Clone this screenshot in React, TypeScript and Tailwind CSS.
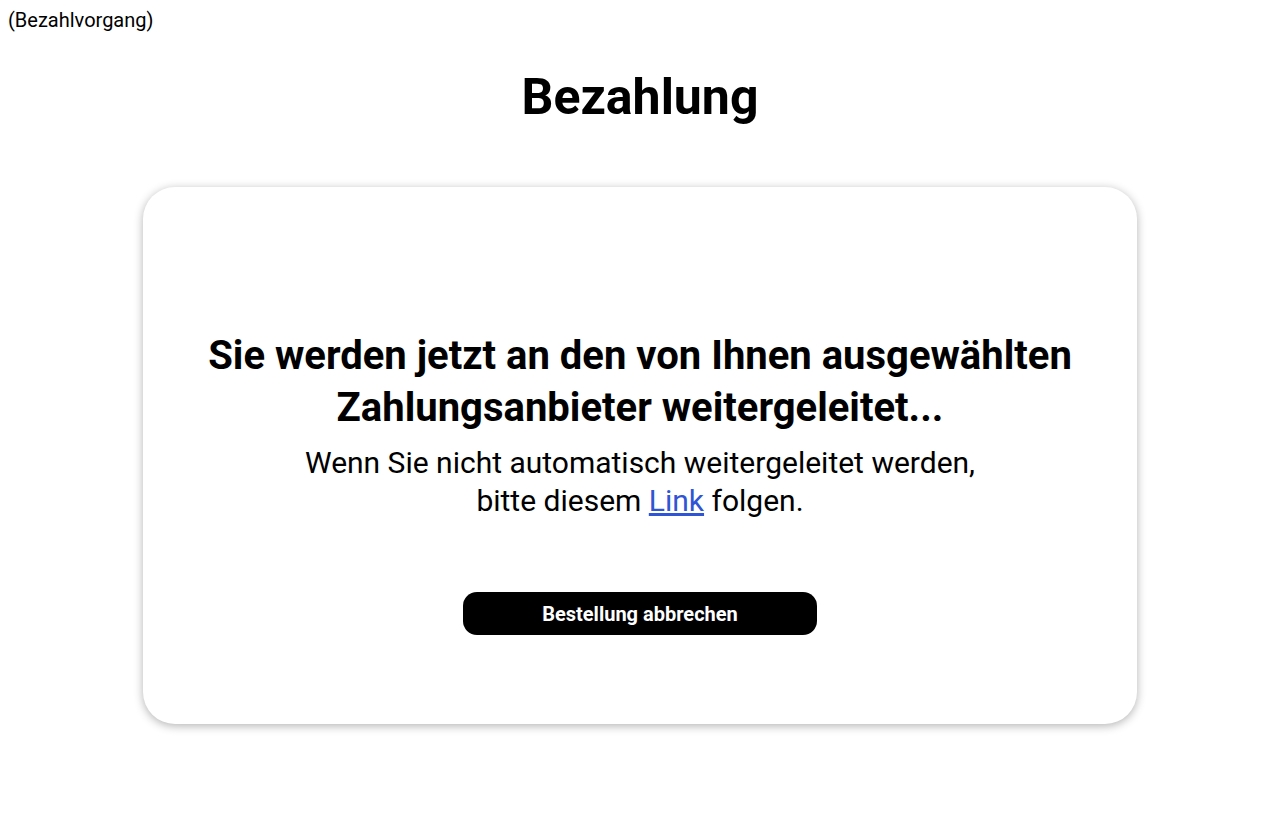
import React from 'react';

export default function App() {
  return (
    <div className="min-h-screen bg-white text-black font-['Roboto',sans-serif]">
      <div className="px-2 pt-[8px] text-[20px] leading-6">(Bezahlvorgang)</div>
      <h1 className="mt-[37px] text-center text-[50px] font-bold leading-[56px]">Bezahlung</h1>
      <div className="mx-auto mt-[62px] w-[994px] rounded-[32px] bg-white shadow-[0_2px_10px_rgba(0,0,0,0.3)] pt-[143px] pb-[89px] flex flex-col items-center">
        <h2 className="text-center text-[40px] font-bold leading-[52px]">
          Sie werden jetzt an den von Ihnen ausgewählten
          <br />
          Zahlungsanbieter weitergeleitet...
        </h2>
        <p className="mt-[10px] text-center text-[30px] leading-[38px]">
          Wenn Sie nicht automatisch weitergeleitet werden,
          <br />
          bitte diesem{' '}
          <a href="#" className="text-[#2f55d4] underline">
            Link
          </a>{' '}
          folgen.
        </p>
        <button className="mt-[72px] h-[43px] w-[354px] rounded-[14px] bg-black text-[20px] font-bold text-white">
          Bestellung abbrechen
        </button>
      </div>
    </div>
  );
}
